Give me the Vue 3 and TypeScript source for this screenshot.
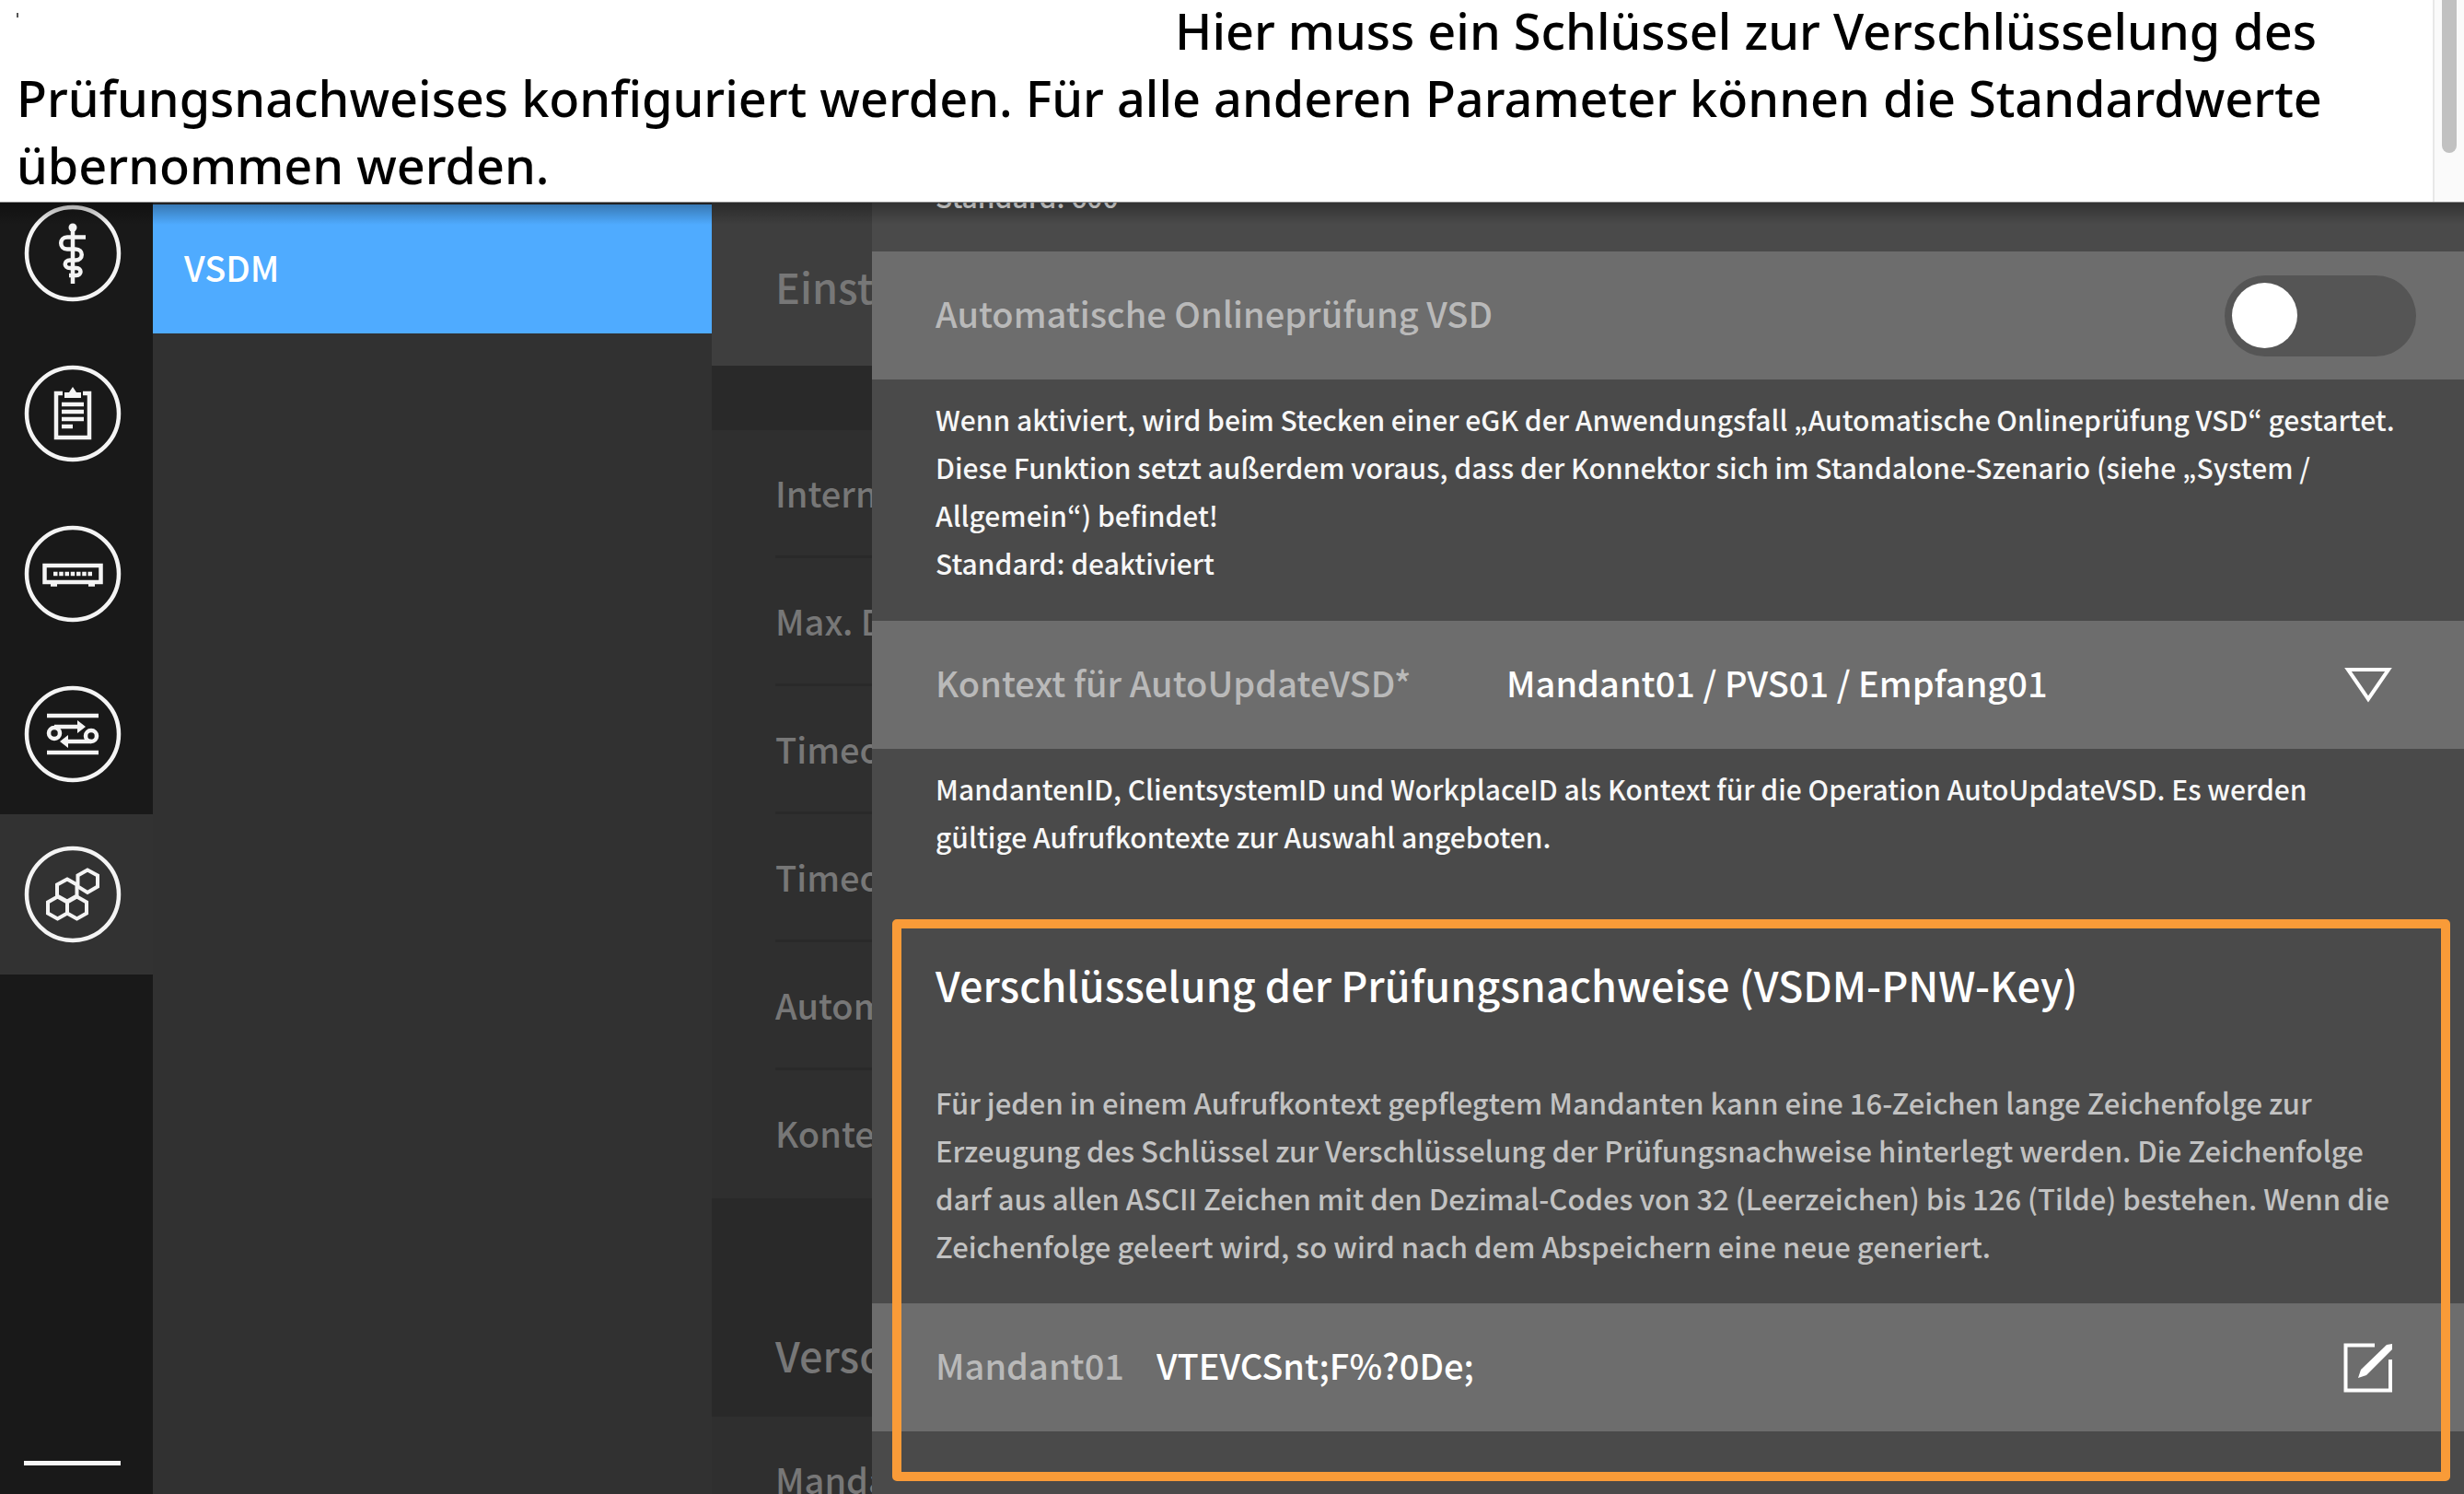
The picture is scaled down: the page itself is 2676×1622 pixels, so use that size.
<script setup lang="ts">
import { ref } from 'vue'

const autoCheck = ref(false)
const context = ref('Mandant01 / PVS01 / Empfang01')
const pnwKey = ref('VTEVCSnt;F%?0De;')

const basicSettings = ['Intern', 'Max. D', 'Timeo', 'Timeo', 'Autom', 'Konte']
const keySettings = ['Manda']
</script>

<template>
  <div class="screen">
    <header class="intro">
      <p class="intro-text">Hier muss ein Schlüssel zur Verschlüsselung des<br>Prüfungsnachweises konfiguriert werden. Für alle anderen Parameter können die Standardwerte<br>übernommen werden.</p>
      <div class="scroll-track"><div class="scroll-thumb"></div></div>
    </header>

    <div class="app">
      <nav class="rail" aria-label="Hauptmenü">
        <button class="rail-item" type="button" aria-label="Praxis">
          <svg viewBox="0 0 106 106" class="rail-icon">
            <circle cx="53" cy="53" r="50" />
            <circle class="solid" cx="53" cy="25" r="4.5" />
            <path d="M53 25V86" />
            <path d="M67 35.500H47C38 35.500 38 48.500 47 48.500H56C65 48.500 65 60.500 56 60.500H50C43 60.500 43 69 50 69H57C63 69 63 77 57 77H49" />
          </svg>
        </button>
        <button class="rail-item" type="button" aria-label="Protokoll">
          <svg viewBox="0 0 106 106" class="rail-icon">
            <circle cx="53" cy="53" r="50" />
            <path d="M42 31H35V79H71V31H64" />
            <path class="solid" d="M44 36V30H49L53 24L57 30H62V36Z" />
            <path d="M41 43H65M41 51H65M41 59H65M41 67H53" />
          </svg>
        </button>
        <button class="rail-item" type="button" aria-label="Netzwerk">
          <svg viewBox="0 0 106 106" class="rail-icon">
            <circle cx="53" cy="53" r="50" />
            <rect x="22.500" y="44" width="61" height="18" />
            <path d="M32 53H74" stroke-dasharray="4.5 1.750" />
            <path d="M29 64.500H36M70 64.500H77" />
          </svg>
        </button>
        <button class="rail-item" type="button" aria-label="Verbindungen">
          <svg viewBox="0 0 106 106" class="rail-icon">
            <circle cx="53" cy="53" r="50" />
            <path d="M25 33H81M25 73H81M33 45H60M73 61H46" />
            <circle cx="33" cy="52" r="6" />
            <circle cx="73" cy="55" r="6" />
            <path class="solid" d="M58 38L67 45L58 52ZM48 54L39 61L48 68Z" />
          </svg>
        </button>
        <button class="rail-item active" type="button" aria-label="Module">
          <svg viewBox="0 0 106 106" class="rail-icon">
            <circle cx="53" cy="53" r="50" />
            <path class="hex" d="M69 26.500L80 32.500V44.500L69 51L58.500 44.500V32.500Z" />
            <path class="hex" d="M47 36.500L57.500 42.500V54.500L47 60.500L36 54.500V42.500Z" />
            <path class="hex" d="M36.500 55.500L47 61.500V73.500L36.500 79.500L26 73.500V61.500Z" />
            <path class="hex" d="M57.500 55.500L68 61.500V73.500L57.500 79.500L47 73.500V61.500Z" />
          </svg>
        </button>
        <div class="rail-line"></div>
      </nav>

      <nav class="modules" aria-label="Module">
        <a class="module" href="#vsdm">VSDM</a>
      </nav>

      <section class="overview">
        <h2 class="overview-title">Einst</h2>
        <div class="spacer"></div>
        <ul class="list">
          <li v-for="(item, i) in basicSettings" :key="i">{{ item }}</li>
        </ul>
        <h2 class="overview-title second">Versc</h2>
        <ul class="list">
          <li v-for="item in keySettings" :key="item">{{ item }}</li>
        </ul>
      </section>

      <main class="panel">
        <p class="help cut">Standard: 600</p>

        <div class="row">
          <label class="label" for="auto">Automatische Onlineprüfung VSD</label>
          <input id="auto" v-model="autoCheck" class="toggle" type="checkbox">
        </div>
        <p class="help">Wenn aktiviert, wird beim Stecken einer eGK der Anwendungsfall „Automatische Onlineprüfung VSD“ gestartet.<br>Diese Funktion setzt außerdem voraus, dass der Konnektor sich im Standalone-Szenario (siehe „System /<br>Allgemein“) befindet!<br>Standard: deaktiviert</p>

        <div class="row">
          <label class="label context-label" for="context">Kontext für AutoUpdateVSD*</label>
          <select id="context" v-model="context" class="field">
            <option>Mandant01 / PVS01 / Empfang01</option>
          </select>
          <svg class="arrow" viewBox="0 0 52 40"><path d="M4 3H48L26 35Z" /></svg>
        </div>
        <p class="help">MandantenID, ClientsystemID und WorkplaceID als Kontext für die Operation AutoUpdateVSD. Es werden<br>gültige Aufrufkontexte zur Auswahl angeboten.</p>

        <section class="keys">
          <h1 class="title">Verschlüsselung der Prüfungsnachweise (VSDM-PNW-Key)</h1>
          <p class="help muted">Für jeden in einem Aufrufkontext gepflegtem Mandanten kann eine 16-Zeichen lange Zeichenfolge zur<br>Erzeugung des Schlüssel zur Verschlüsselung der Prüfungsnachweise hinterlegt werden. Die Zeichenfolge<br>darf aus allen ASCII Zeichen mit den Dezimal-Codes von 32 (Leerzeichen) bis 126 (Tilde) bestehen. Wenn die<br>Zeichenfolge geleert wird, so wird nach dem Abspeichern eine neue generiert.</p>
          <div class="row">
            <label class="label key-label" for="key">Mandant01</label>
            <input id="key" v-model="pnwKey" class="field" type="text">
            <button class="edit" type="button" aria-label="Bearbeiten">
              <svg viewBox="0 0 54 54">
                <path d="M34 2.500H2.500V51.500H51V18" />
                <path class="pen" d="M16 38L19 29L47 2L53 1L53 7L25 35Z" />
              </svg>
            </button>
          </div>
          <div class="highlight"></div>
        </section>
      </main>
    </div>
  </div>
</template>

<style>
body {
  margin: 0;
}
</style>

<style scoped>
* {
  box-sizing: border-box;
}
.screen {
  display: flex;
  flex-direction: column;
  height: 100vh;
  overflow: hidden;
  font-family: "Noto Sans CJK KR", "Noto Sans", sans-serif;
  font-weight: 500;
  background: #313131;
}
.intro {
  position: relative;
  display: flex;
  flex: none;
  height: 220px;
  background: #fff;
  border-bottom: 1px solid #888;
  overflow: hidden;
}
.intro::before {
  content: "";
  position: absolute;
  top: 14px;
  left: 18px;
  width: 2px;
  height: 5px;
  background: #555;
}
.intro-text {
  flex: 1;
  margin: -3px 0 0;
  padding-left: 18px;
  color: #000;
  font-family: "Noto Sans", sans-serif;
  font-size: 54px;
  line-height: 73px;
  white-space: nowrap;
  text-indent: 1258px;
}
.scroll-track {
  width: 34px;
  padding-left: 8px;
  background: #fafafa;
  border-left: 2px solid #e8e8e8;
}
.scroll-thumb {
  width: 16px;
  height: 166px;
  background: #c1c1c1;
  border-radius: 0 0 8px 8px;
}
.app {
  position: relative;
  display: flex;
  flex: 1;
  min-height: 0;
}
.app::before {
  content: "";
  position: absolute;
  z-index: 2;
  inset: 0 0 auto;
  height: 24px;
  background: linear-gradient(rgba(0, 0, 0, 0.32), rgba(0, 0, 0, 0));
  pointer-events: none;
}
.rail {
  display: flex;
  flex: none;
  flex-direction: column;
  width: 166px;
  overflow: hidden;
  background: #191919;
}
.rail-item {
  flex: none;
  height: 174px;
  padding: 0 8px 0 0;
  border: 0;
  background: none;
}
.rail-item:first-child {
  margin-top: -32px;
}
.rail-item.active {
  background: #323232;
}
.rail-icon {
  display: block;
  width: 106px;
  height: 106px;
  margin: 0 auto;
  fill: none;
  stroke: #f4f4f4;
  stroke-width: 4.5;
}
.rail-icon .solid {
  fill: #f4f4f4;
  stroke: none;
}
.rail-icon .hex {
  stroke-width: 4;
}
.rail-line {
  height: 5px;
  margin: auto 35px 31px 26px;
  background: #f7f7f7;
}
.modules {
  flex: none;
  width: 607px;
  background: #313131;
}
.module {
  display: block;
  margin-top: 2px;
  padding: 0 34px 4px;
  color: #fff;
  background: #4fabff;
  font-size: 38px;
  line-height: 136px;
  text-decoration: none;
}
.overview {
  flex: none;
  width: 174px;
  overflow: hidden;
  color: #777;
  background: #2f2f2f;
  white-space: nowrap;
}
.overview-title {
  margin: 0;
  padding: 51px 0 46px 69px;
  background: #3e3e3e;
  font-size: 45px;
  font-weight: 500;
  line-height: 80px;
}
.overview-title.second {
  padding: 130px 0 27px 69px;
  background: #292929;
}
.spacer {
  height: 70px;
  background: #292929;
}
.list {
  margin: 0;
  padding: 0 0 0 69px;
  list-style: none;
  font-size: 38px;
  line-height: 136px;
}
.list li {
  padding-bottom: 3px;
}
.list li + li {
  box-shadow: 0 -3px #292929;
}
.panel {
  flex: 1;
  min-width: 0;
  overflow: hidden;
  color: #f7f7f7;
  background: #4a4a4a;
  white-space: nowrap;
}
.help {
  margin: 0;
  padding: 17px 69px 37px;
  font-size: 30px;
  line-height: 52px;
}
.help.cut {
  margin-top: -50px;
  padding-bottom: 34px;
}
.row {
  display: flex;
  align-items: center;
  height: 139px;
  padding: 0 52px 0 69px;
  background: #6d6d6d;
}
.label {
  flex: none;
  padding-bottom: 6px;
  color: #b9b9b9;
  font-size: 38px;
}
.context-label {
  width: 620px;
}
.key-label {
  width: 240px;
}
.field {
  flex: 1;
  min-width: 0;
  height: 80px;
  padding: 0 0 6px;
  border: 0;
  outline: 0;
  appearance: none;
  color: #fff;
  background: none;
  font: inherit;
  font-size: 38px;
}
.toggle {
  display: flex;
  align-items: center;
  width: 208px;
  height: 88px;
  margin: 0 0 0 auto;
  padding-left: 8px;
  appearance: none;
  border-radius: 44px;
  background: #555;
}
.toggle::before {
  content: "";
  width: 71px;
  height: 71px;
  border-radius: 50%;
  background: #fff;
}
.arrow {
  width: 52px;
  height: 40px;
  margin-right: 26px;
  fill: none;
  stroke: #fff;
  stroke-width: 4;
}
.keys {
  position: relative;
  padding-top: 68px;
}
.title {
  margin: 0 69px 55px;
  font-size: 45px;
  font-weight: 500;
  line-height: 60px;
  color: #fff;
}
.muted {
  padding-bottom: 36px;
  color: #c2c2c2;
  font-size: 31px;
}
.edit {
  width: 54px;
  height: 54px;
  margin-right: 25px;
  padding: 0;
  border: 0;
  background: none;
}
.edit svg {
  display: block;
  fill: none;
  stroke: #fff;
  stroke-width: 4;
}
.edit .pen {
  fill: #fff;
  stroke: none;
}
.highlight {
  position: absolute;
  inset: 27px 15px -54px 22px;
  border: 10px solid #f99b38;
  border-radius: 5px;
  pointer-events: none;
}
</style>
